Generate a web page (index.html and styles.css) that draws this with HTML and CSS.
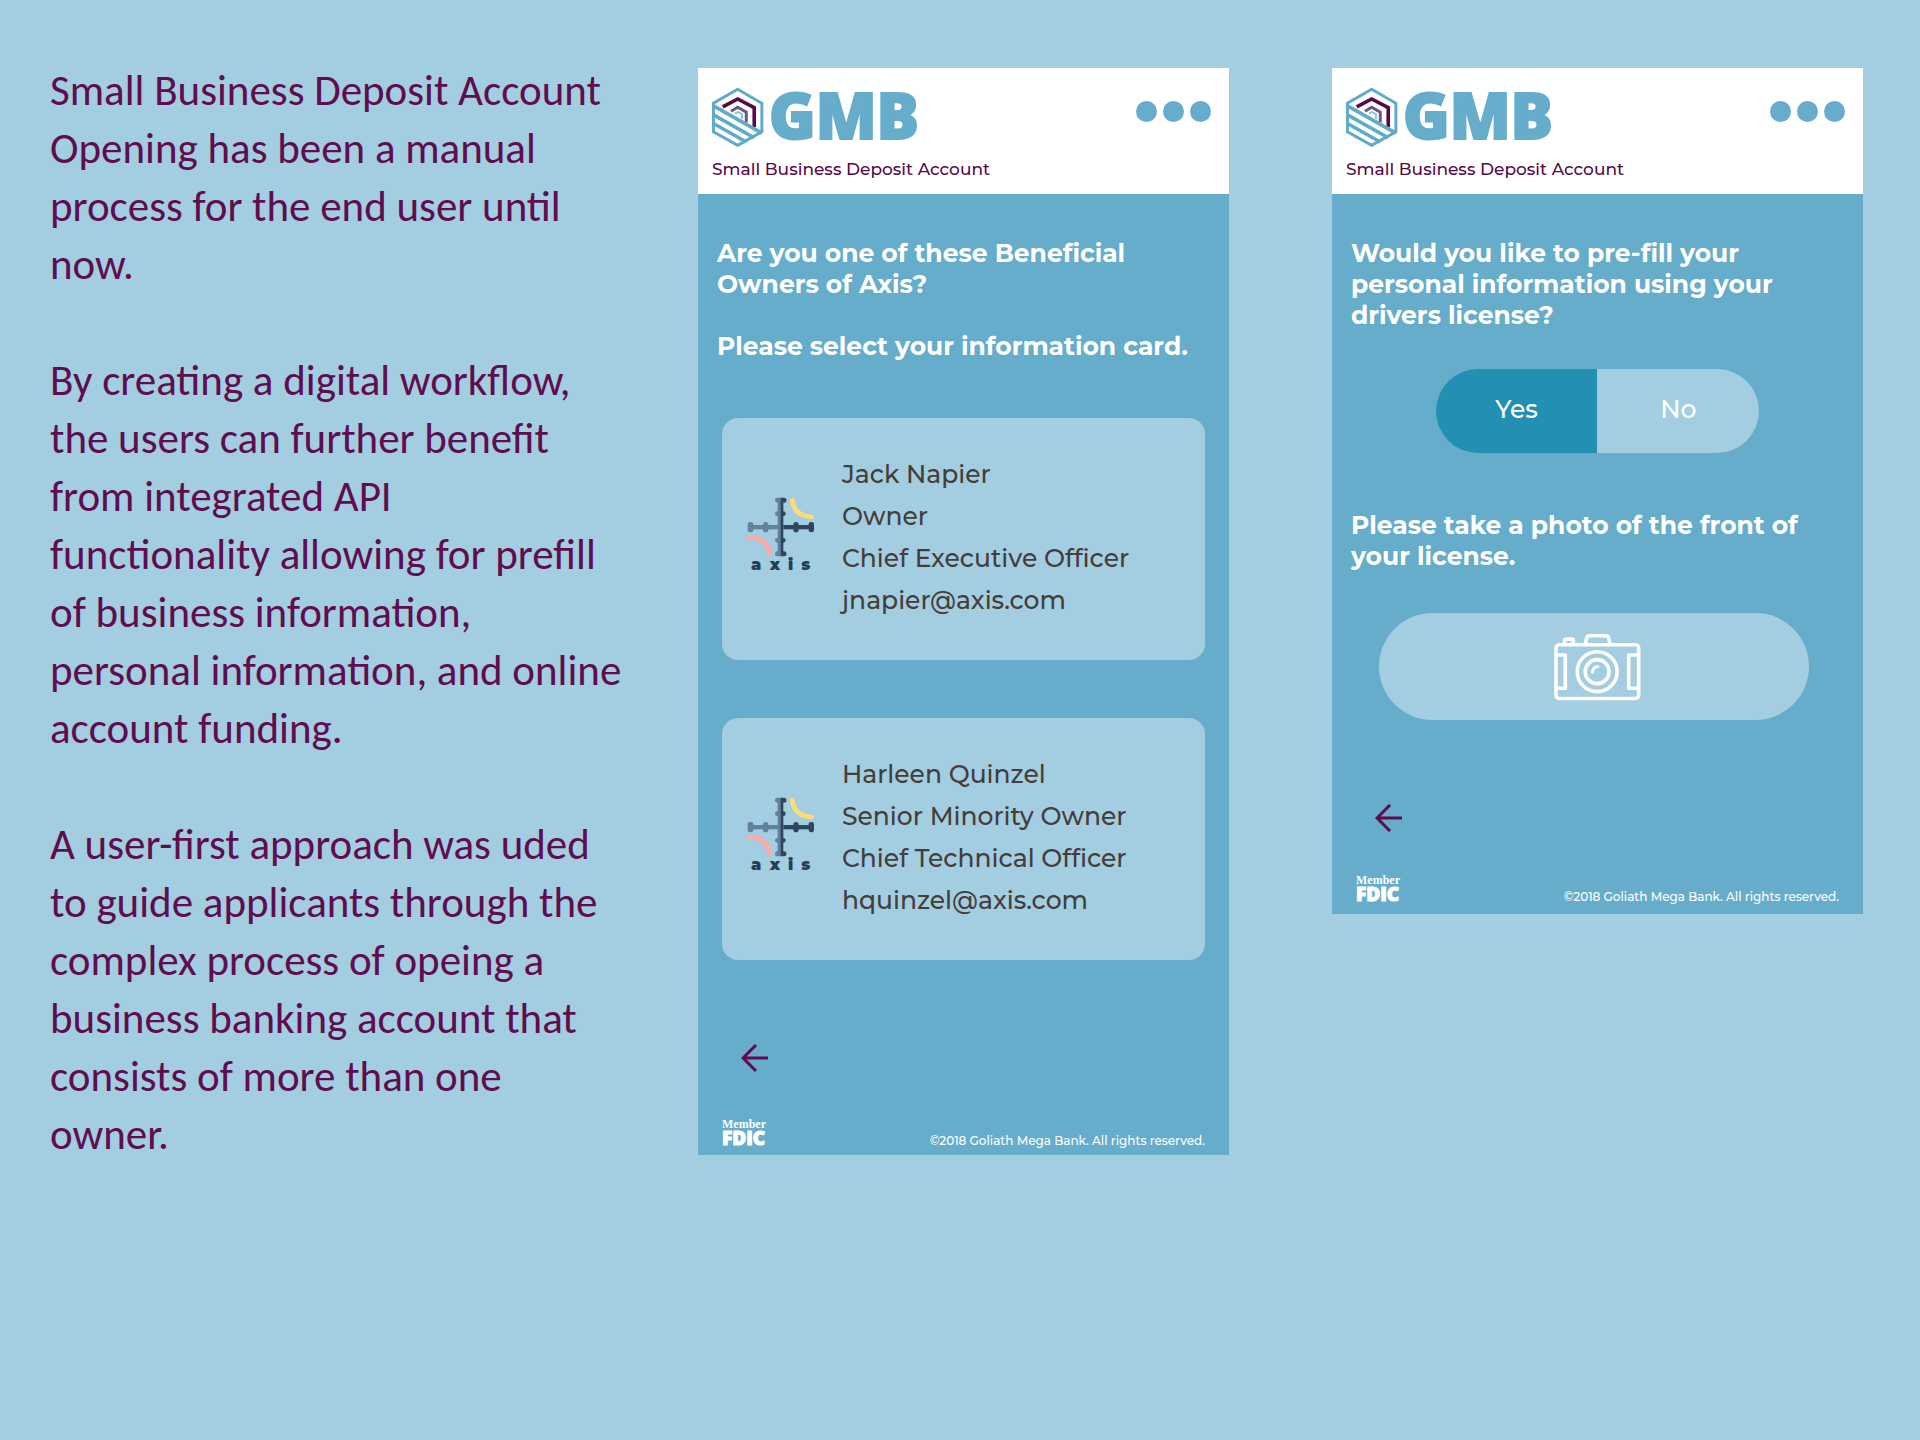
FILE: index.html
```html
<!DOCTYPE html>
<html lang="en">
<head>
<meta charset="utf-8">
<title>Small Business Deposit Account</title>
<link rel="stylesheet" href="styles.css">
</head>
<body>
<svg class="sprite" aria-hidden="true">
  <symbol id="hex" viewBox="21 24 156 178">
    <path d="M90 101 99 97 111 103V118" fill="none" stroke="#8fc3da" stroke-width="6"/>
    <path d="M78 94 98 82 124 97V128" fill="none" stroke="#6a5687" stroke-width="9"/>
    <path d="M53 81 98 57 148 83V142" fill="none" stroke="#560a49" stroke-width="11"/>
    <g fill="none" stroke="#5fabc9" stroke-width="9">
      <path d="M98 28 171 70V156L98 197 25 156V70Z"/>
      <path d="M25 78 171 160M25 105 148 174M25 131 124 187" stroke-width="11"/>
    </g>
  </symbol>
  <symbol id="axis" viewBox="0 0 204 222">
    <g fill="#64809f">
      <rect x="84" y="2" width="24" height="15" rx="7"/><rect x="84" y="43" width="24" height="14" rx="7"/>
      <rect x="84" y="123" width="24" height="14" rx="7"/><rect x="84" y="163" width="24" height="15" rx="7"/>
      <rect x="92" y="6" width="12" height="168"/><rect x="6" y="84" width="94" height="13"/>
      <rect x="2" y="75" width="17" height="31" rx="7"/><rect x="48" y="75" width="16" height="31" rx="8"/>
    </g>
    <g fill="#30465f">
      <path d="M101 2h10a7 7 0 0 1 0 15h-2v26a7 7 0 0 1 0 14v66a7 7 0 0 1 0 14v26h2a7 7 0 0 1 0 15h-10z"/>
      <rect x="109" y="84" width="86" height="13"/>
      <rect x="139" y="75" width="16" height="31" rx="8"/><rect x="185" y="75" width="16" height="31" rx="7"/>
    </g>
    <path d="M136 9Q140 56 194 60" fill="none" stroke="#ffdc73" stroke-width="14" stroke-linecap="round"/>
    <path d="M9 121Q60 120 68 171" fill="none" stroke="#ffaaa9" stroke-width="14" stroke-linecap="round"/>
    <text class="axis-word" x="12 68 123 163" y="218">axis</text>
  </symbol>
  <symbol id="back" viewBox="0 0 28 28">
    <path d="M27 14H3M15 1 2 14 15 27" fill="none" stroke="#600b50" stroke-width="3"/>
  </symbol>
  <symbol id="camera" viewBox="44 38 262 204">
    <g fill="none" stroke="#fff" stroke-width="11" stroke-linejoin="round">
      <rect x="50" y="73" width="249" height="162" rx="10"/>
      <path d="M76 72V60Q76 56 80 56H98Q102 56 102 60V72M137 72 144 49Q146 46 150 46H200Q205 46 207 49L214 72"/>
      <path d="M50 104H78V204H50M299 104H269V204H299"/>
      <circle cx="174" cy="154" r="60"/><circle cx="174" cy="154" r="36"/>
      <path d="M160 156Q160 140 176 139" stroke-width="9" stroke-linecap="round"/>
    </g>
  </symbol>
</svg>

<main class="page">
  <article class="story">
    <p>Small Business Deposit Account Opening has been a manual process for the end user until now.</p>
    <p>By creating a digital workflow, the users can further benefit from integrated API<br>functionality allowing for prefill of business information, personal information, and online account funding.</p>
    <p>A user-first approach was uded to guide applicants through the complex process of opeing a business banking account that consists of more than one owner.</p>
  </article>

  <div class="screens">
    <section class="screen">
      <header class="screen-head">
        <div class="brand-row">
          <div class="brand"><svg class="hex"><use href="#hex"/></svg><span class="brand-name">GMB</span></div>
          <button class="more" type="button" aria-label="Menu"><span class="dot"></span><span class="dot"></span><span class="dot"></span></button>
        </div>
        <p class="product">Small Business Deposit Account</p>
      </header>
      <div class="screen-body">
        <h2 class="question">Are you one of these Beneficial<br>Owners of Axis?<br><br>Please select your information card.</h2>
        <div class="cards">
          <button class="card" type="button">
            <svg class="axis"><use href="#axis"/></svg>
            <span class="person"><span>Jack Napier</span><span>Owner</span><span>Chief Executive Officer</span><span>jnapier@axis.com</span></span>
          </button>
          <button class="card" type="button">
            <svg class="axis"><use href="#axis"/></svg>
            <span class="person"><span>Harleen Quinzel</span><span>Senior Minority Owner</span><span>Chief Technical Officer</span><span>hquinzel@axis.com</span></span>
          </button>
        </div>
        <button class="back" type="button" aria-label="Back"><svg class="back-icon"><use href="#back"/></svg></button>
        <footer class="screen-foot">
          <span class="fdic"><span class="member">Member</span><span class="fdic-name">FDIC</span></span>
          <small class="legal">©2018 Goliath Mega Bank. All rights reserved.</small>
        </footer>
      </div>
    </section>

    <section class="screen screen-license">
      <header class="screen-head">
        <div class="brand-row">
          <div class="brand"><svg class="hex"><use href="#hex"/></svg><span class="brand-name">GMB</span></div>
          <button class="more" type="button" aria-label="Menu"><span class="dot"></span><span class="dot"></span><span class="dot"></span></button>
        </div>
        <p class="product">Small Business Deposit Account</p>
      </header>
      <div class="screen-body">
        <h2 class="question">Would you like to pre-fill your<br>personal information using your<br>drivers license?</h2>
        <div class="toggle" role="radiogroup" aria-label="Pre-fill using your drivers license">
          <label class="option"><input type="radio" name="prefill" checked><span>Yes</span></label>
          <label class="option"><input type="radio" name="prefill"><span>No</span></label>
        </div>
        <h2 class="question">Please take a photo of the front of<br>your license.</h2>
        <button class="photo" type="button" aria-label="Take photo"><svg class="camera"><use href="#camera"/></svg></button>
        <button class="back" type="button" aria-label="Back"><svg class="back-icon"><use href="#back"/></svg></button>
        <footer class="screen-foot">
          <span class="fdic"><span class="member">Member</span><span class="fdic-name">FDIC</span></span>
          <small class="legal">©2018 Goliath Mega Bank. All rights reserved.</small>
        </footer>
      </div>
    </section>
  </div>
</main>
</body>
</html>
```
FILE: styles.css
```css
* { box-sizing: border-box; }
body {
  margin: 0;
  background: #a3cde0;
  font-family: Montserrat, Inter, sans-serif;
}
button {
  padding: 0;
  border: 0;
  background: none;
  color: inherit;
  font: inherit;
  cursor: pointer;
}
svg { display: block; }
h2, p { margin: 0; }
.sprite { position: absolute; width: 0; height: 0; }

.page {
  display: flex;
  align-items: flex-start;
  gap: 68px;
  padding: 62px 57px 60px 50px;
}
.story {
  flex: 580 1 0;
  display: grid;
  gap: 58px;
  color: #5f0d4f;
  font: 43px/58px Carlito, Lato, sans-serif;
}
.screens {
  flex: 1165 1 0;
  display: grid;
  grid-template-columns: 1fr 1fr;
  align-items: start;
  gap: 103px;
  padding-top: 6px;
}
.screen { background: #66adcb; }

.screen-head {
  padding: 20px 18px 13px 14px;
  background: #fff;
}
.brand-row { display: flex; justify-content: space-between; }
.brand { display: flex; align-items: center; gap: 5px; }
.hex { width: 52px; height: 59px; }
.brand-name {
  padding-bottom: 6px;
  color: #66adcb;
  font: 800 63px/53px "Open Sans", sans-serif;
  -webkit-text-stroke: 2px #66adcb;
}
.more { display: flex; align-self: center; gap: 6px; padding-bottom: 12px; }
.dot { width: 21px; height: 21px; border-radius: 50%; background: #66adcb; }
.product {
  padding-top: 10px;
  color: #560a49;
  font-size: 17px;
  font-weight: 500;
  line-height: 24px;
}

.screen-body {
  display: flex;
  flex-direction: column;
  align-items: flex-start;
  padding: 44px 24px 8px;
  color: #fff;
}
.question {
  margin-left: -5px;
  font-size: 25px;
  font-weight: 700;
  line-height: 31px;
  white-space: nowrap;
}
.cards { display: grid; gap: 58px; width: 100%; padding-top: 56px; }
.card {
  display: flex;
  align-items: flex-start;
  gap: 27px;
  padding: 35px 25px 39px;
  border-radius: 16px;
  background: #a3cde0;
  color: #433d3b;
  font-size: 25px;
  font-weight: 500;
  line-height: 42px;
  text-align: left;
}
.axis { width: 68px; height: 74px; margin-top: 44px; }
.axis-word { fill: #263d59; font: 900 48px Montserrat, "DejaVu Sans", sans-serif; }
.person { display: grid; }

.back { margin: 84px 0 0 19px; }
.back-icon { width: 28px; height: 28px; }
.screen-foot {
  display: flex;
  justify-content: space-between;
  align-items: flex-end;
  width: 100%;
  padding-top: 48px;
}
.fdic { display: grid; }
.member { font: 700 12px/9px "Liberation Serif", serif; }
.fdic-name {
  font: 800 19px/18px "Open Sans", sans-serif;
  -webkit-text-stroke: 1px #fff;
}
.legal { font-size: 12px; font-weight: 500; line-height: 12px; }
.screen-license .screen-body { padding-bottom: 11px; }
.screen-license .screen-foot { padding-top: 44px; }

.toggle {
  display: grid;
  grid-template-columns: 1fr 1fr;
  align-self: center;
  width: 67%;
  margin: 38px 0 57px;
  border-radius: 42px;
  overflow: hidden;
}
.option {
  position: relative;
  padding-bottom: 4px;
  background: #a3cde0;
  font-size: 25px;
  font-weight: 500;
  line-height: 80px;
  text-align: center;
}
.option:has(input:checked) { background: #2390b3; }
.option input { position: absolute; opacity: 0; }
.photo {
  display: flex;
  justify-content: center;
  width: 89%;
  margin: 41px 0 0 23px;
  padding: 20px 0 19px 7px;
  border-radius: 54px;
  background: #a3cde0;
}
.camera { width: 87px; height: 68px; }
```
